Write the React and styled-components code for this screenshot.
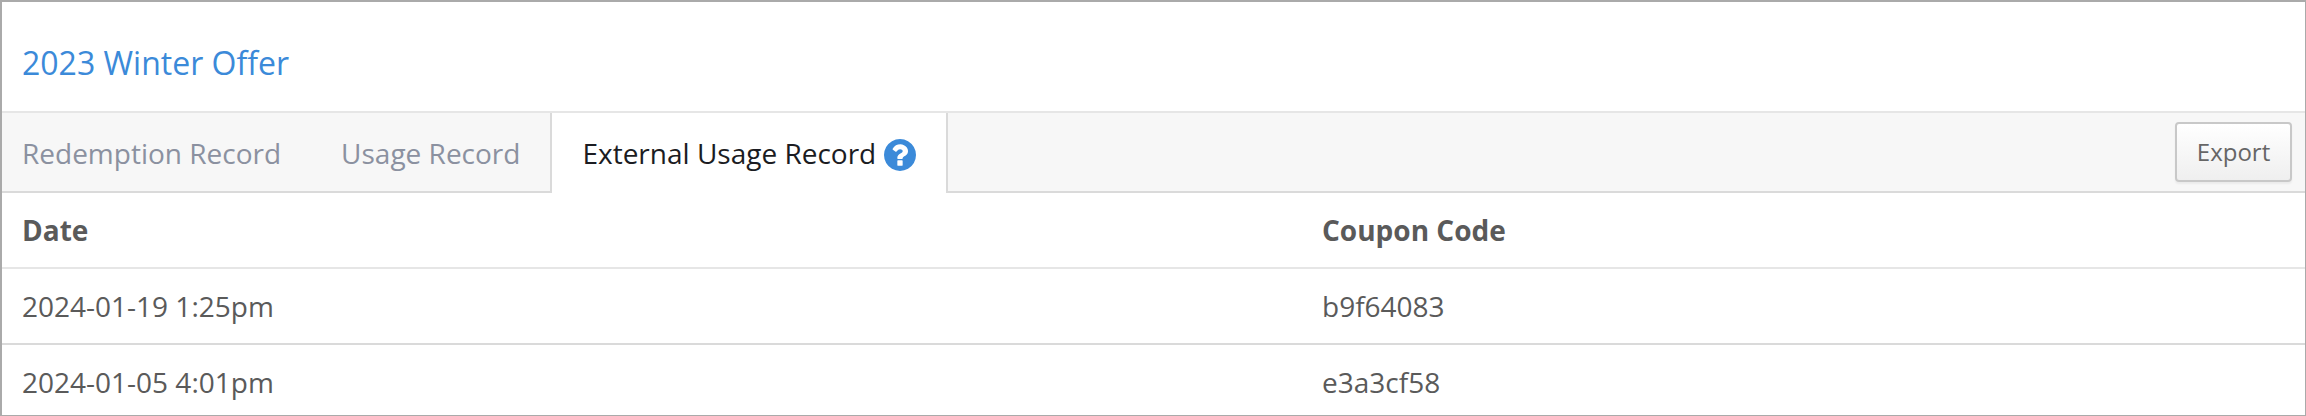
import React from 'react'
import styled, { createGlobalStyle } from 'styled-components'

const colors = {
    link: '#3b8ad9',
    text: '#5a5a5a',
    muted: '#8b91a0',
    active: '#1b1c22',
    bar: '#f7f7f7',
    line: '#e6e6e6',
    lineDarker: '#dadada',
}

const GlobalStyle = createGlobalStyle`
body {
    margin: 0;
    font-family: 'Open Sans', 'Noto Sans', sans-serif;
    font-size: 28px;
    color: ${colors.text};
    background: white;
}
`

const Panel = styled.div`
    box-sizing: border-box;
    width: 100%;
    height: 416px;
    overflow: hidden;
    background: white;
    border: solid #aaaaaa;
    border-width: 2px 1px 1px 2px;
`

const Header = styled.header`
    box-sizing: border-box;
    height: 111px;
    padding: 13px 20px 0;
    display: flex;
    align-items: center;
    border-bottom: 2px solid ${colors.line};

    h1 {
        margin: 0;
        color: ${colors.link};
        font-size: 32px;
        font-weight: 400;
        line-height: 44px;
    }
`

const TabBar = styled.nav`
    display: flex;
    height: 80px;
    background: ${colors.bar};
`

const Tab = styled.div`
    box-sizing: border-box;
    display: flex;
    align-items: center;
    gap: 8px;
    padding: ${props => props.$first ? '2px 30px 0 20px' : '2px 30px 0'};
    color: ${props => props.$active ? colors.active : colors.muted};
    background: ${props => props.$active ? 'white' : 'transparent'};
    border: 0 solid ${colors.lineDarker};
    border-width: ${props => props.$active ? '0 2px' : '0 0 2px'};
    line-height: 38px;
    white-space: nowrap;

    span {
        padding-bottom: ${props => props.$active ? '2px' : '0'};
    }

    svg {
        display: block;
        width: 32px;
        height: 32px;
        margin-top: 1px;
        fill: ${colors.link};
    }
`

const Actions = styled.div`
    flex: 1;
    display: flex;
    justify-content: flex-end;
    align-items: center;
    padding-right: 13px;
    border-bottom: 2px solid ${colors.lineDarker};
`

const Button = styled.button`
    box-sizing: border-box;
    width: 117px;
    height: 60px;
    padding: 0;
    border: 2px solid #c8c8c8;
    border-radius: 4px;
    background: linear-gradient(#ffffff, #efefef);
    box-shadow: 0 2px 2px rgba(0, 0, 0, 0.05);
    color: #666666;
    font-family: inherit;
    font-size: 24px;
    line-height: 32px;
`

const Row = styled.div`
    display: grid;
    grid-template-columns: 1300px 1fr;
    align-items: center;
    height: 74px;
    padding-left: 20px;
    line-height: 38px;
    font-weight: ${props => props.$head ? 700 : 400};
    border-bottom: 2px solid ${props => props.$head ? colors.line : colors.lineDarker};
`

const HelpIcon = () => (
    <svg viewBox="128 128 1536 1536">
        <path d="M1024 1376v-192q0-14-9-23t-23-9h-192q-14 0-23 9t-9 23v192q0 14 9 23t23 9h192q14 0 23-9t9-23zm256-672q0-88-55.5-163t-138.5-116-170-41q-243 0-371 213-15 24 8 42l132 100q7 6 19 6 16 0 25-12 53-68 86-92 34-24 86-24 48 0 85.5 26t37.5 59q0 38-20 61t-68 45q-63 28-115.5 86.5t-52.5 125.500v36q0 14 9 23t23 9h192q14 0 23-9t9-23q0-19 21.5-49.5t54.5-49.5q32-18 49-28.5t46-35 44.5-48 28-60.5 12.5-81zm384 192q0 209-103 385.5t-279.5 279.5-385.5 103-385.5-103-279.5-279.5-103-385.5 103-385.5 279.5-279.5 385.5-103 385.5 103 279.5 279.5 103 385.5z" />
    </svg>
)

const records = [
    { date: '2024-01-19 1:25pm', code: 'b9f64083' },
    { date: '2024-01-05 4:01pm', code: 'e3a3cf58' },
]

const App = () => {
    return (
        <>
            <GlobalStyle />
            <Panel>
                <Header>
                    <h1>2023 Winter Offer</h1>
                </Header>
                <TabBar>
                    <Tab $first><span>Redemption Record</span></Tab>
                    <Tab><span>Usage Record</span></Tab>
                    <Tab $active>
                        <span>External Usage Record</span>
                        <HelpIcon />
                    </Tab>
                    <Actions>
                        <Button>Export</Button>
                    </Actions>
                </TabBar>
                <Row $head>
                    <span>Date</span>
                    <span>Coupon Code</span>
                </Row>
                {records.map(record => (
                    <Row key={record.code}>
                        <span>{record.date}</span>
                        <span>{record.code}</span>
                    </Row>
                ))}
            </Panel>
        </>
    )
}

export default App
